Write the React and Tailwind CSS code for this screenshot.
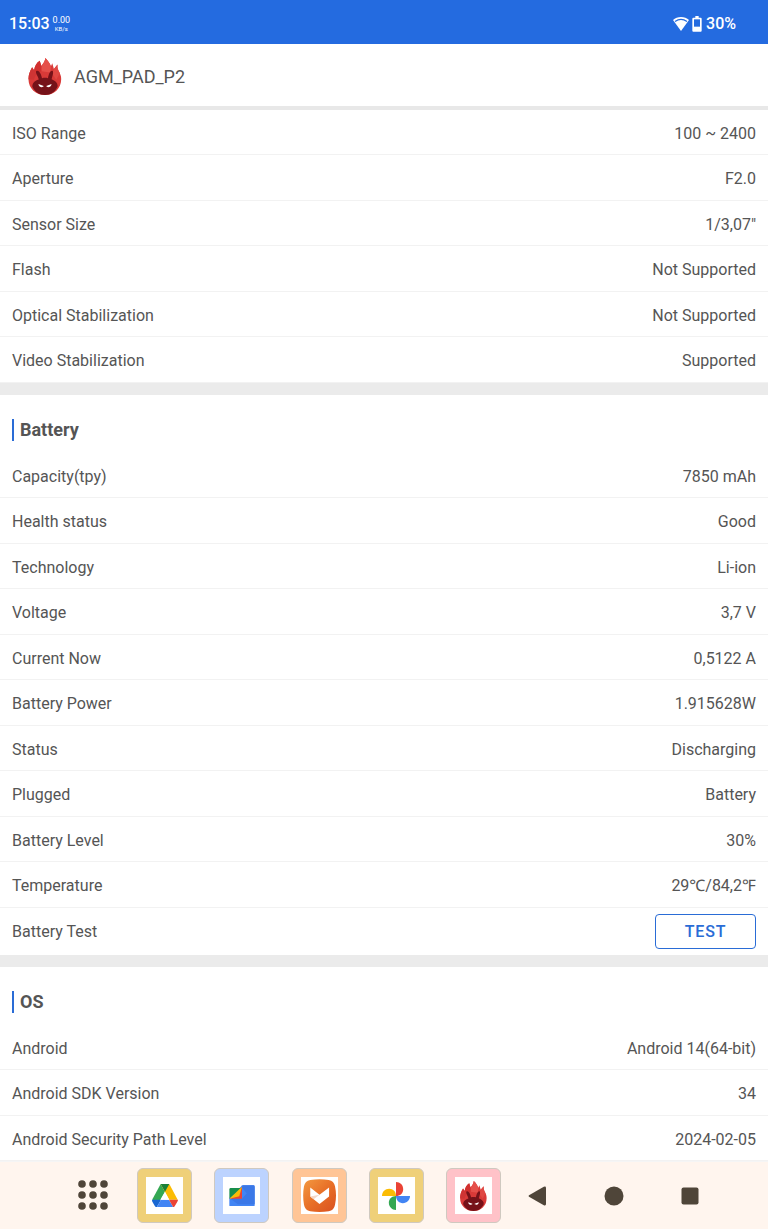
const cameraRows = [
    ["ISO Range", "100 ~ 2400"],
    ["Aperture", "F2.0"],
    ["Sensor Size", "1/3,07\""],
    ["Flash", "Not Supported"],
    ["Optical Stabilization", "Not Supported"],
    ["Video Stabilization", "Supported"],
];

const batteryRows = [
    ["Capacity(tpy)", "7850 mAh"],
    ["Health status", "Good"],
    ["Technology", "Li-ion"],
    ["Voltage", "3,7 V"],
    ["Current Now", "0,5122 A"],
    ["Battery Power", "1.915628W"],
    ["Status", "Discharging"],
    ["Plugged", "Battery"],
    ["Battery Level", "30%"],
    ["Temperature", "29℃/84,2℉"],
];

const osRows = [
    ["Android", "Android 14(64-bit)"],
    ["Android SDK Version", "34"],
    ["Android Security Path Level", "2024-02-05"],
];

function AntutuIcon({ className }) {
    return (
        <svg viewBox="26 22 100 112" className={className} aria-hidden="true">
            <path d="M26 86C26 72 30 62 37 50L43 59C45 46 50 37 60 30L65 46C71 38 76 32 77 22C84 28 90 37 94 47L98 38L103 55L114 42C112 54 118 62 121 68C124 75 125 80 125 86C125 114 103 134 76 134S26 114 26 86Z" fill="#d93a38" />
            <path d="M77 22C84 28 90 37 94 47L92 66L66 62L65 46C71 38 76 32 77 22Z" fill="#e5504a" />
            <path d="M37 50L50 70L42 88L26 86C26 72 30 62 37 50Z" fill="#cf3434" />
            <path d="M114 42C112 54 118 62 121 68L110 88L98 70L103 55Z" fill="#e04843" />
            <path d="M60 30L65 46L64 62L50 68L43 59C45 46 50 37 60 30Z" fill="#d1302f" />
            <path d="M49 62C56 57 63 66 67 83C73 81 80 81 85 83C88 67 94 57 100 62C102 68 98 78 96 86C109 91 116 100 114 109C106 125 94 134 76 134S46 125 38 110C36 100 44 91 57 87C56 78 47 70 49 62Z" fill="#761219" />
            <path d="M56 101L72 107C71 112 58 113 56 101ZM96 101L80 107C81 112 94 113 96 101Z" fill="#fff" />
        </svg>
    );
}

function DriveIcon() {
    return (
        <svg viewBox="0 0 78 70" className="w-[26px]" aria-hidden="true">
            <path d="M26 0L39 23L14 66L2 51Q0 48 2 44Z" fill="#34a853" />
            <path d="M26 0H49Q52 0 54 4L77 47H51Z" fill="#fbbc04" />
            <path d="M26 0H52L39 23Z" fill="#188038" />
            <path d="M0 47H27L14 70Q10 69 8 65L1 53Q0 50 0 47Z" fill="#1967d2" />
            <path d="M27 47H51L64 70H14Z" fill="#4285f4" />
            <path d="M51 47H78Q78 50 76 53L69 65Q67 69 64 70Z" fill="#ea4335" />
            <path d="M39 23L52 47H26Z" fill="#fff" />
        </svg>
    );
}

function FilesIcon() {
    return (
        <svg viewBox="0 0 76 64" className="w-[26px]" aria-hidden="true">
            <path d="M36 4Q36 1 40 1H71Q75 1 75 5V59Q75 63 71 63H5Q1 63 1 59V38Z" fill="#4285f4" />
            <path d="M38 8L52 24L38 40H4L26 56H75V5Q75 1 71 1H40Z" fill="#3b78e7" />
            <path d="M5 9H37L1 40V13Q1 9 5 9Z" fill="#188e4c" />
            <path d="M38 5V40H1Q18 36 38 5Z" fill="#ea4335" />
            <path d="M38 5L30 33L1 40Z" fill="#fbbc04" />
        </svg>
    );
}

function AptoideIcon() {
    return (
        <svg viewBox="0 0 100 100" className="w-[33px]" aria-hidden="true">
            <defs>
                <linearGradient id="aptoide" x1="0" y1="0" x2="1" y2="1">
                    <stop offset="0" stopColor="#f39a41" />
                    <stop offset="0.5" stopColor="#e86f27" />
                    <stop offset="1" stopColor="#d9501f" />
                </linearGradient>
            </defs>
            <path d="M22 3Q50 -2 78 3Q94 6 97 22Q103 50 97 78Q94 95 78 98Q50 102 22 98Q6 95 3 78Q-2 50 3 22Q6 6 22 3Z" fill="url(#aptoide)" />
            <path d="M22 26L50 48L79 26V53L50 76L22 53Z" fill="#fff" />
            <path d="M22 53L50 48L32 61Z" fill="#f4d8c8" />
        </svg>
    );
}

function PhotosIcon() {
    return (
        <svg viewBox="0 0 82 82" className="w-[28px]" aria-hidden="true">
            <path d="M41 0C53 0 62 9 62 21S53 41 41 41Z" fill="#ea4335" />
            <path d="M82 41C82 53 73 62 61 62S41 53 41 41Z" fill="#4285f4" />
            <path d="M41 82C29 82 20 73 20 61S29 41 41 41Z" fill="#34a853" />
            <path d="M0 41C0 29 9 20 21 20S41 29 41 41Z" fill="#fbbc04" />
        </svg>
    );
}

function Row({ label, value }) {
    return (
        <div className="flex items-center justify-between border-b border-[#f2f2f2] px-3 pt-[3px] odd:h-[45px] even:h-[46px]">
            <dt>{label}</dt>
            <dd>{value}</dd>
        </div>
    );
}

function Rows({ items }) {
    return (
        <dl>
            {items.map(([label, value]) => (
                <Row key={label} label={label} value={value} />
            ))}
        </dl>
    );
}

function SectionTitle({ children }) {
    return (
        <div className="flex h-[58px] items-center gap-[6px] px-3 pt-3">
            <span className="h-[22px] w-[2px] bg-[#2a6cd6]" />
            <h2 className="text-lg font-bold">{children}</h2>
        </div>
    );
}

function AppTile({ label, className, children }) {
    return (
        <button type="button" aria-label={label} className={`size-[55px] cursor-pointer rounded-md border border-[#cfc9c0] p-2 ${className}`}>
            <span className="flex size-full items-center justify-center bg-white">{children}</span>
        </button>
    );
}

export default function App() {
    return (
        <div className="min-h-screen bg-white font-['Roboto','Noto_Sans',sans-serif] text-base text-[#555555]">
            <div className="flex h-11 items-center justify-between bg-[#246be0] pt-[3px] pr-8 pl-[9px] text-white">
                <div className="flex items-center gap-[3px]">
                    <span className="text-base font-medium">15:03</span>
                    <span className="flex flex-col items-center">
                        <span className="text-[9px] leading-[10px]">0.00</span>
                        <span className="text-[6px] leading-[8px]">KB/s</span>
                    </span>
                </div>
                <div className="flex items-center">
                    <svg viewBox="0 0 48 42" className="mr-[3px] w-4" aria-hidden="true">
                        <path d="M24 0C15 0 6 3 0 9L24 42L48 9C42 3 33 0 24 0Z" fill="#fff" />
                        <path d="M5 12Q24 -1 43 12L41 15Q24 3 7 15Z" fill="#246be0" />
                    </svg>
                    <svg viewBox="0 0 30 48" className="mr-1 w-[10px]" aria-hidden="true">
                        <path d="M10 0H20V5H26Q29 5 29 8V44Q29 47 26 47H4Q1 47 1 44V8Q1 5 4 5H10Z" fill="#fff" />
                        <path d="M6 10H24V32H6Z" fill="#246be0" />
                    </svg>
                    <span className="font-medium">30%</span>
                </div>
            </div>

            <header className="flex h-[66px] items-center gap-3 border-b-4 border-[#e8e8e8] pt-[3px] pl-7">
                <AntutuIcon className="h-[37px] w-[34px]" />
                <h1 className="text-lg">AGM_PAD_P2</h1>
            </header>

            <main>
                <section>
                    <Rows items={cameraRows} />
                </section>

                <section className="border-t-12 border-[#ebebeb]">
                    <SectionTitle>Battery</SectionTitle>
                    <Rows items={batteryRows} />
                    <div className="flex h-[47px] items-center justify-between px-3">
                        <span>Battery Test</span>
                        <button type="button" className="h-[35px] w-[101px] cursor-pointer rounded-sm border border-[#2a6cd6] font-medium tracking-wider text-[#2a6cd6]">
                            TEST
                        </button>
                    </div>
                </section>

                <section className="border-t-12 border-[#ebebeb]">
                    <SectionTitle>OS</SectionTitle>
                    <Rows items={osRows} />
                </section>
            </main>

            <nav className="flex h-[68px] items-center border-t border-[#f5f5f5] bg-[#fff5ee] pl-[78px]">
                <button type="button" aria-label="All apps" className="mr-7 cursor-pointer">
                    <svg viewBox="0 0 31 31" className="size-[31px]" fill="#4f4539" aria-hidden="true">
                        {[4, 15, 26].map((y) => [4, 15, 26].map((x) => <circle key={`${x}-${y}`} cx={x} cy={y} r="3.8" />))}
                    </svg>
                </button>
                <div className="flex w-[364px] justify-between">
                    <AppTile label="Drive" className="bg-[#efd079]">
                        <DriveIcon />
                    </AppTile>
                    <AppTile label="Files" className="bg-[#bcd3ff]">
                        <FilesIcon />
                    </AppTile>
                    <AppTile label="Aptoide" className="bg-[#ffc596]">
                        <AptoideIcon />
                    </AppTile>
                    <AppTile label="Photos" className="bg-[#efd079]">
                        <PhotosIcon />
                    </AppTile>
                    <AppTile label="AnTuTu" className="bg-[#ffc2c8]">
                        <AntutuIcon className="h-[30px] w-[27px]" />
                    </AppTile>
                </div>
                <div className="ml-[27px] flex gap-[56px]">
                    <button type="button" aria-label="Back" className="cursor-pointer">
                        <svg viewBox="0 0 20 20" className="size-5" fill="#4f4539" aria-hidden="true">
                            <path d="M1 9.2L15.8 .8Q18 0 18 2V18Q18 20 15.8 19.2L1 10.8Q0 10 1 9.2Z" />
                        </svg>
                    </button>
                    <button type="button" aria-label="Home" className="cursor-pointer">
                        <svg viewBox="0 0 20 20" className="size-5" fill="#4f4539" aria-hidden="true">
                            <circle cx="10" cy="10" r="9.5" />
                        </svg>
                    </button>
                    <button type="button" aria-label="Recent apps" className="cursor-pointer">
                        <svg viewBox="0 0 20 20" className="size-5" fill="#4f4539" aria-hidden="true">
                            <rect x="1.5" y="1.5" width="17" height="17" rx="2" />
                        </svg>
                    </button>
                </div>
            </nav>
        </div>
    );
}
